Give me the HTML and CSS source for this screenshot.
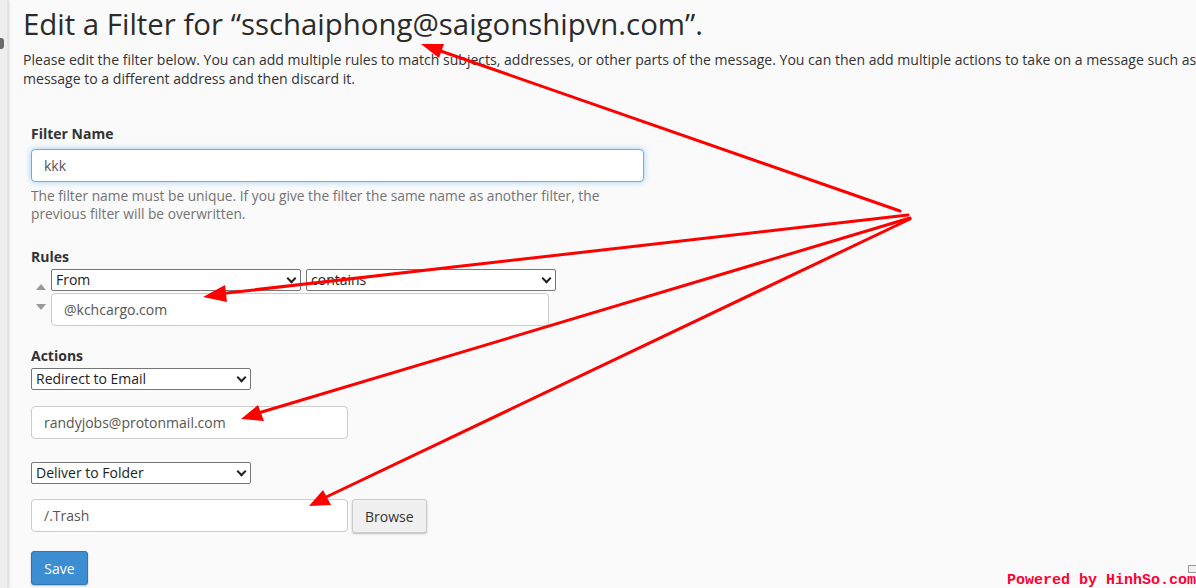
FILE: index.html
```html
<!DOCTYPE html>
<html>
<head>
<meta charset="utf-8">
<link rel="stylesheet" href="styles.css">
</head>
<body>
<div class="layout">
  <aside class="sidebar"><span class="side-icon"></span></aside>
  <main class="main">
    <h1 class="title">Edit a Filter for “sschaiphong@saigonshipvn.com”.</h1>
    <p class="intro">Please edit the filter below. You can add multiple rules to match subjects, addresses, or other parts of the message. You can then add multiple actions to take on a message such as to redirect a<br>message to a different address and then discard it.</p>

    <form class="form">
      <div class="group">
        <label class="label">Filter Name</label>
        <div class="input wide focus">kkk</div>
        <p class="help">The filter name must be unique. If you give the filter the same name as another filter, the previous filter will be overwritten.</p>
      </div>

      <div class="group rules">
        <label class="label">Rules</label>
        <div class="rule">
          <div class="movers">
            <span class="tri up"></span>
            <span class="tri down"></span>
          </div>
          <div class="rule-fields">
            <div class="selects">
              <div class="select s-rule">From<span class="chev"></span></div>
              <div class="select s-rule">contains<span class="chev"></span></div>
            </div>
            <div class="input rule-val">@kchcargo.com</div>
          </div>
        </div>
      </div>

      <div class="group actions">
        <label class="label">Actions</label>
        <div class="select s-act">Redirect to Email<span class="chev"></span></div>
        <div class="input act-val">randyjobs@protonmail.com</div>
        <div class="select s-act second">Deliver to Folder<span class="chev"></span></div>
        <div class="folder-row">
          <div class="input act-val">/.Trash</div>
          <button type="button" class="btn">Browse</button>
        </div>
      </div>

      <button type="button" class="btn primary">Save</button>
    </form>
  </main>
</div>

<svg class="arrows" width="1196" height="588" viewBox="0 0 1196 588">
  <g stroke="#ff0000" stroke-width="3" fill="none" stroke-linecap="round">
    <line x1="900" y1="211" x2="432" y2="48"/>
    <line x1="908" y1="215" x2="218" y2="294"/>
    <line x1="910" y1="218" x2="255" y2="414"/>
    <line x1="910" y1="219" x2="322" y2="499"/>
  </g>
  <g fill="#ff0000">
    <polygon points="421,44 444,44 439,58"/>
    <polygon points="203,297 225,285 227,302"/>
    <polygon points="241,419 258,405 264,421"/>
    <polygon points="309,506 323,490 331,505"/>
  </g>
</svg>

<div class="credit">Powered by HinhSo.com</div>
<div class="corner"></div>
</body>
</html>
```
FILE: styles.css
```css
* { box-sizing: border-box; }
html, body { margin: 0; padding: 0; }
body {
  width: 1196px;
  height: 588px;
  overflow: hidden;
  background: #fafafa;
  font-family: "Open Sans", "Liberation Sans", sans-serif;
  color: #333;
  position: relative;
}
.layout {
  display: flex;
  width: 1320px;
  height: 588px;
}
.sidebar {
  flex: 0 0 8px;
  background: #eeeeee;
  box-shadow: 1px 0 3px rgba(0,0,0,0.15);
  position: relative;
  border-right: 1px solid #e2e2e2;
}
.side-icon {
  position: absolute;
  left: 0;
  top: 38px;
  width: 4px;
  height: 11px;
  background: #6a6a6a;
  border-radius: 0 3px 3px 0;
}
.main {
  flex: 1;
  padding: 0 0 0 15px;
}
.title {
  font-size: 29.4px;
  font-weight: 400;
  margin: 4px 0 0;
  line-height: 40px;
  color: #2b2b2b;
}
.intro {
  font-size: 14.05px;
  line-height: 19px;
  margin: 6px 0 0;
  color: #333;
}
.form {
  padding: 36px 0 0 8px;
}
.label {
  display: block;
  font-weight: 700;
  font-size: 14px;
  line-height: 20px;
  color: #333;
}
.group { margin-bottom: 0; }
.input {
  background: #fff;
  border: 1px solid #ccc;
  border-radius: 4px;
  height: 33px;
  font-size: 14px;
  line-height: 31px;
  padding: 0 12px;
  color: #555;
}
.input.wide { width: 613px; margin-top: 5px; }
.input.focus {
  border-color: #66afe9;
  box-shadow: 0 0 6px rgba(102,175,233,0.6);
}
.help {
  margin: 5px 0 0;
  font-size: 13.75px;
  line-height: 18px;
  color: #737373;
  width: 600px;
}
.rules { margin-top: 24px; }
.rule {
  display: flex;
  margin-top: 2px;
}
.movers {
  width: 20px;
  display: flex;
  flex-direction: column;
  align-items: center;
  padding-top: 15px;
  gap: 14px;
}
.tri {
  width: 0; height: 0;
  border-left: 5px solid transparent;
  border-right: 5px solid transparent;
}
.tri.up { border-bottom: 6px solid #999; }
.tri.down { border-top: 6px solid #999; }
.selects { display: flex; gap: 5px; }
.select {
  position: relative;
  background: #fff;
  border: 1px solid #767676;
  border-radius: 2px;
  height: 22px;
  font-size: 14px;
  line-height: 20px;
  padding: 0 4px;
  color: #222;
}
.s-rule { width: 250px; }
.chev {
  position: absolute;
  right: 5px;
  top: 5px;
  width: 7px;
  height: 7px;
  border-right: 2px solid #222;
  border-bottom: 2px solid #222;
  transform: rotate(45deg);
}
.rule-val { width: 498px; margin-top: 2px; }
.actions { margin-top: 20px; }
.s-act { width: 220px; margin-top: 2px; }
.act-val { width: 317px; }
.actions .act-val { margin-top: 16px; }
.s-act.second { margin-top: 23px; }
.folder-row { display: flex; align-items: flex-start; gap: 4px; margin-top: 15px; }
.folder-row .act-val { margin-top: 0; }
.btn {
  font-family: "Open Sans", "Liberation Sans", sans-serif;
  font-size: 14px;
  height: 34px;
  padding: 0 12px;
  border-radius: 3px;
  border: 1px solid #ccc;
  background: #f0f0f0;
  color: #333;
  box-shadow: 0 1px 2px rgba(0,0,0,0.25);
}
.btn.primary {
  margin-top: 18px;
  background: #3c8dd1;
  border-color: #2d77b8;
  color: #fff;
  width: 57px;
  padding: 0;
}
.arrows {
  position: absolute;
  left: 0;
  top: 0;
  pointer-events: none;
}
.credit {
  position: absolute;
  right: 0;
  bottom: 0;
  font-family: "Liberation Mono", "DejaVu Sans Mono", monospace;
  font-weight: 700;
  font-size: 15px;
  line-height: 15px;
  color: #ff0033;
}
.corner {
  position: absolute;
  right: 0;
  top: 565px;
  width: 8px;
  height: 8px;
  border: 1px solid #999;
  border-right: none;
  background: #f2f2f2;
}
```
